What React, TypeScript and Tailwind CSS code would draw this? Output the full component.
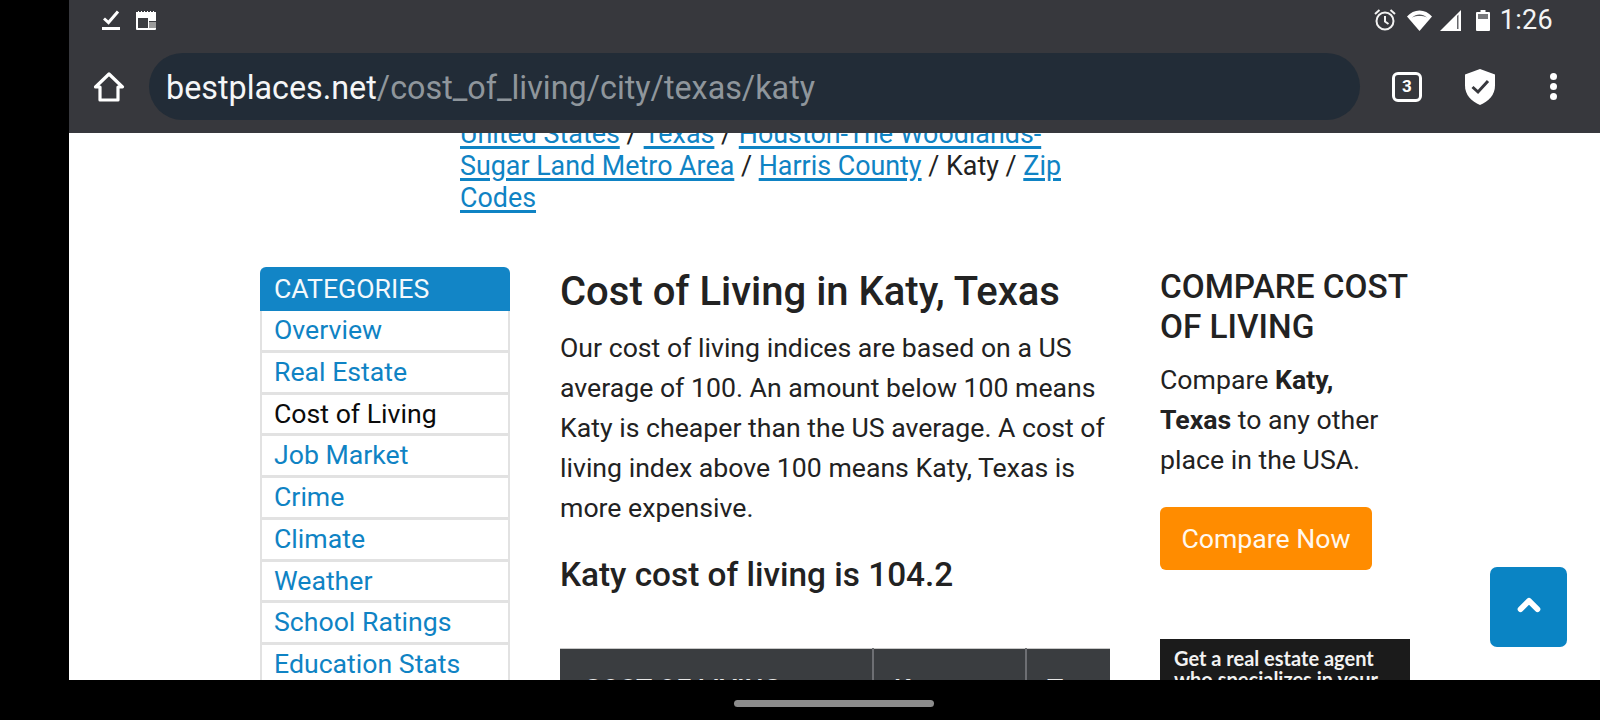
import { ChevronUp } from "lucide-react";

const categories = [
  { label: "Overview" },
  { label: "Real Estate" },
  { label: "Cost of Living", active: true },
  { label: "Job Market" },
  { label: "Crime" },
  { label: "Climate" },
  { label: "Weather" },
  { label: "School Ratings" },
  { label: "Education Stats" },
];

function StatusBar() {
  return (
    <div className="flex h-[40px] items-center justify-between pl-[33px] pr-[47px]">
      <div className="flex items-center gap-[16px]">
        <svg width="18" height="20" viewBox="0 0 18 20" fill="none" stroke="white">
          <path d="M2 8.500l4.500 4L16 1.500" strokeWidth="3" />
          <path d="M0 18.500h18" strokeWidth="3" />
        </svg>
        <svg width="22" height="21" viewBox="0 0 22 21" fill="white">
          <path d="M0 2h2V1h1v1h2V1h1v1h2V1h1v1h2V1h1v1h2V1h1v1h2V1h1v1h2v17a1 1 0 0 1-1 1H1a1 1 0 0 1-1-1z" />
          <rect x="2" y="8" width="18" height="10" fill="#3b3c40" />
          <rect x="13" y="8" width="7" height="3" fill="white" />
          <rect x="13" y="12" width="7" height="6" fill="#9a9a9a" />
          <rect x="12" y="8" width="1" height="10" fill="white" />
        </svg>
      </div>
      <div className="flex items-center text-white">
        <svg width="24" height="24" viewBox="0 0 24 24" fill="none" stroke="#f2f2f2" strokeWidth="2" className="mr-[10px]">
          <circle cx="12" cy="13" r="8.500" />
          <path d="M12 8v5.500l3.500 2.500M2 6l4.500-4M22 6l-4.500-4" />
        </svg>
        <svg width="25" height="21" viewBox="0 0 25 21" fill="white" className="mr-[8px]">
          <path d="M12.500 21L0 6.500C3.500 2.700 7.700 0.500 12.500 0.500s9 2.200 12.500 6z" />
          <path d="M5 7.400C7.200 5.500 9.700 4.500 12.500 4.500s5.300 1 7.500 2.900C17.700 6.500 15.200 6 12.500 6S7.300 6.500 5 7.400z" fill="#55565a" />
        </svg>
        <svg width="21" height="21" viewBox="0 0 21 21" className="mr-[15px]">
          <path d="M0 21L21 0v21z" fill="white" />
          <path d="M17 6v13h1.500V4.500z" fill="#66676b" />
        </svg>
        <svg width="14" height="21" viewBox="0 0 14 21" className="mr-[10px]">
          <path d="M4.500 0h5v2H13a1 1 0 0 1 1 1v17a1 1 0 0 1-1 1H1a1 1 0 0 1-1-1V3a1 1 0 0 1 1-1h3.500z" fill="white" />
          <rect x="2" y="4" width="10" height="5" fill="#77787b" />
        </svg>
        <span className="text-[27px] leading-none tracking-[0.3px] text-[#f4f4f4]">1:26</span>
      </div>
    </div>
  );
}

function Toolbar() {
  return (
    <div className="mt-[13px] flex h-[80px] items-start">
      <div className="flex h-[67px] w-[80px] items-center justify-center">
        <svg width="32" height="32" viewBox="0 0 32 32" fill="none" stroke="white" strokeWidth="3.200" strokeLinejoin="round">
          <path d="M2.500 16L16 3l13.500 13H25v13H7V16z" />
        </svg>
      </div>
      <div className="flex h-[67px] w-[1211px] items-center rounded-[34px] bg-[#222c37] pl-[17px] pt-[3px] text-[32.300px] leading-none">
        <span className="text-[#f5f6f7]">bestplaces.net</span>
        <span className="text-[#8f969c]">/cost_of_living/city/texas/katy</span>
      </div>
      <div className="flex h-[67px] flex-1 items-center">
        <div className="ml-[32px] flex h-[30px] w-[30px] items-center justify-center rounded-[6px] border-[3px] border-white text-[17px] font-bold leading-none text-white">
          3
        </div>
        <svg width="30" height="36" viewBox="0 0 30 36" className="ml-[43px]">
          <path d="M15 0L30 5.500v11C30 26 23.500 32.500 15 36 6.500 32.500 0 26 0 16.500v-11z" fill="white" />
          <path d="M7.500 18l5.500 5 10-11" fill="none" stroke="#37383d" strokeWidth="3" />
        </svg>
        <div className="ml-[55px] flex flex-col gap-[3px]">
          <span className="h-[7px] w-[7px] rounded-full bg-white" />
          <span className="h-[7px] w-[7px] rounded-full bg-white" />
          <span className="h-[7px] w-[7px] rounded-full bg-white" />
        </div>
      </div>
    </div>
  );
}

function Crumb({ children }: { children: string }) {
  return <a className="text-[#0f83c4] underline decoration-[3px] underline-offset-[3px]">{children}</a>;
}

function Sidebar() {
  return (
    <aside className="mt-[3px] w-[250px] shrink-0 self-start">
      <div className="flex h-[44px] items-center rounded-t-[6px] bg-[#1285c6] pl-[14px] text-[26.67px] text-[#f4f9fc]">CATEGORIES</div>
      <ul>
        {categories.map((c) => (
          <li
            key={c.label}
            className={`flex h-[41.75px] items-center border-x-2 border-b-[3px] border-[#e2e2e2] pl-[12px] text-[26.67px] leading-none ${c.active ? "text-[#0b0b0b]" : "text-[#0f83c4]"}`}
          >
            {c.label}
          </li>
        ))}
      </ul>
    </aside>
  );
}

function MainColumn() {
  return (
    <section className="ml-[50px] w-[550px] shrink-0">
      <h1 className="mt-[5px] text-[40px] font-medium leading-[46px] text-[#222]">Cost of Living in Katy, Texas</h1>
      <p className="mt-[13px] text-[26.67px] leading-[40px] text-[#222]">
        Our cost of living indices are based on a US average of 100. An amount below 100 means Katy is cheaper than the US average. A cost of living index above 100 means Katy, Texas is more expensive.
      </p>
      <h2 className="mt-[27px] text-[33.33px] font-medium leading-[40px] text-[#222]">Katy cost of living is 104.2</h2>
      <table className="mt-[53px] w-full table-fixed bg-[#3a3d40] text-[26.67px] text-[#e8e8e8]">
        <thead>
          <tr className="h-[80px] border-t border-[#c8c8c8] text-left">
            <th className="w-[313px] pl-[24px] font-medium">COST OF LIVING</th>
            <th className="w-[153px] border-l-2 border-[#6d6f73] pl-[20px] font-medium">Katy</th>
            <th className="border-l-2 border-[#6d6f73] pl-[20px] font-medium">Texas</th>
          </tr>
        </thead>
      </table>
    </section>
  );
}

function CompareColumn() {
  return (
    <section className="ml-[50px] w-[250px] shrink-0">
      <h2 className="mt-[3px] text-[33.33px] font-medium leading-[40px] text-[#222]">COMPARE COST OF LIVING</h2>
      <p className="mt-[13px] text-[26.67px] leading-[40px] text-[#222]">
        Compare <b className="font-bold">Katy, Texas</b> to any other place in the USA.
      </p>
      <button className="mt-[27px] flex h-[63px] w-[212px] items-center justify-center rounded-[6px] bg-[#ff8c00] text-[26.67px] text-[#fff8ee]">Compare Now</button>
      <div className="mt-[69px] h-[120px] bg-[#1b1b1b] px-[14px] pt-[9px] font-['Lato',sans-serif] text-[20px] font-bold leading-[21px] text-[#f2f2f2]">
        Get a real estate agent who specializes in your area
      </div>
    </section>
  );
}

export default function App() {
  return (
    <div className="relative flex h-[720px] w-[1600px] overflow-hidden bg-black font-['Roboto',sans-serif]">
      <div className="w-[69px] shrink-0 bg-black" />
      <div className="flex min-w-0 flex-1 flex-col">
        <header className="z-10 h-[133px] shrink-0 bg-[#37383d]">
          <StatusBar />
          <Toolbar />
        </header>
        <main className="relative h-[547px] shrink-0 overflow-hidden bg-white">
          <div className="-mt-[15px] flex flex-col">
            <div className="ml-[391px] w-[610px] text-[26.850px] leading-[32px] text-[#222]">
              <Crumb>United States</Crumb> / <Crumb>Texas</Crumb> / <Crumb>Houston-The Woodlands-Sugar Land Metro Area</Crumb> / <Crumb>Harris County</Crumb> / Katy / <Crumb>Zip Codes</Crumb>
            </div>
            <div className="mt-[50px] ml-[191px] flex">
              <Sidebar />
              <MainColumn />
              <CompareColumn />
            </div>
          </div>
          <button className="absolute left-[1421px] top-[434px] flex h-[80px] w-[77px] items-center justify-center rounded-[7px] bg-[#0a84c4] pb-[4px]">
            <ChevronUp size={34} strokeWidth={4} color="white" />
          </button>
        </main>
      </div>
      <div className="absolute bottom-[13px] left-[734px] h-[7px] w-[200px] rounded-full bg-[#8c8c8c]" />
    </div>
  );
}
